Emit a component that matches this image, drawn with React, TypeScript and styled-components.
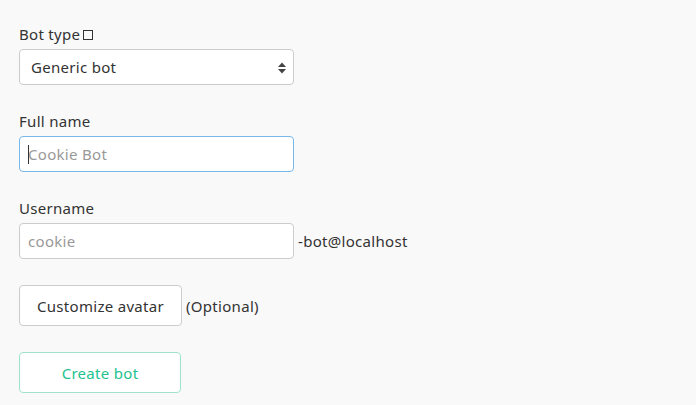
import React from 'react';
import styled, { createGlobalStyle } from 'styled-components';

const GlobalStyle = createGlobalStyle`
  html, body {
    margin: 0;
    padding: 0;
    background: #f9f9f9;
  }
  body {
    font-family: "Noto Sans", Lato, sans-serif;
    font-size: 15px;
    letter-spacing: 0.3px;
    color: #333;
  }
`;

const Form = styled.div`
  padding: 24px 19px 0;
  display: flex;
  flex-direction: column;
  gap: 26px;
`;

const Field = styled.div`
  display: flex;
  flex-direction: column;
`;

const Label = styled.label`
  font-size: 15px;
  line-height: 21px;
  margin-bottom: 4px;
  display: flex;
  align-items: center;
  gap: 3px;
`;

const Tofu = styled.span`
  display: inline-block;
  width: 10px;
  height: 10px;
  border: 1.5px solid #333;
  box-sizing: border-box;
  margin-top: 1px;
`;

const Row = styled.div`
  display: flex;
  align-items: center;
  gap: 4px;
`;

const SelectBox = styled.div`
  position: relative;
  width: 275px;
  height: 36px;
  box-sizing: border-box;
  border: 1px solid #ccc;
  border-radius: 4px;
  background: #fff;
  display: flex;
  align-items: center;
  padding: 0 11px;
  font-size: 15px;
  color: #333;
`;

const Arrows = styled.svg`
  position: absolute;
  right: 6px;
  top: 11px;
`;

const Input = styled.div<{ $focused?: boolean }>`
  position: relative;
  width: 275px;
  height: 36px;
  box-sizing: border-box;
  border: 1px solid ${p => (p.$focused ? '#7ab8ea' : '#ccc')};
  border-radius: 4px;
  background: #fff;
  display: flex;
  align-items: center;
  padding: 0 8px;
  font-size: 15px;
  color: #999;
`;

const Caret = styled.span`
  position: absolute;
  left: 8px;
  top: 8px;
  width: 1px;
  height: 19px;
  background: #333;
`;

const Suffix = styled.span`
  font-size: 15px;
  color: #333;
`;

const Button = styled.button<{ $primary?: boolean }>`
  height: 41px;
  box-sizing: border-box;
  padding: 0 17px;
  font-family: inherit;
  font-size: 15px;
  letter-spacing: inherit;
  border-radius: 4px;
  background: #fff;
  cursor: pointer;
  color: ${p => (p.$primary ? '#22c28f' : '#333')};
  border: 1px solid ${p => (p.$primary ? '#a0e3c9' : '#ccc')};
  width: ${p => (p.$primary ? '162px' : 'auto')};
`;

export default function App() {
  return (
    <>
      <GlobalStyle />
      <Form>
        <Field>
          <Label>
            Bot type <Tofu />
          </Label>
          <SelectBox>
            Generic bot
            <Arrows width="10" height="14" viewBox="0 0 10 14">
              <path d="M5 1.5 L9 6 L1 6 Z" fill="#444" />
              <path d="M5 12.5 L9 8 L1 8 Z" fill="#444" />
            </Arrows>
          </SelectBox>
        </Field>
        <Field>
          <Label>Full name</Label>
          <Input $focused>
            <Caret />
            Cookie Bot
          </Input>
        </Field>
        <Field>
          <Label>Username</Label>
          <Row>
            <Input>cookie</Input>
            <Suffix>-bot@localhost</Suffix>
          </Row>
        </Field>
        <Row>
          <Button>Customize avatar</Button>
          <Suffix>(Optional)</Suffix>
        </Row>
        <div>
          <Button $primary>Create bot</Button>
        </div>
      </Form>
    </>
  );
}
